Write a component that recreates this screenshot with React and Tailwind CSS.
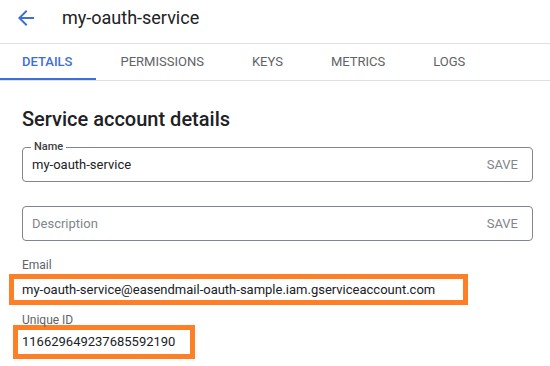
const tabs = ["DETAILS", "PERMISSIONS", "KEYS", "METRICS", "LOGS"];

function ArrowBack() {
  return (
    <svg width="24" height="24" viewBox="0 0 24 24" className="fill-[#3f6fd6]">
      <path d="M20 11H7.83l5.59-5.59L12 4l-8 8 8 8 1.41-1.41L7.83 13H20v-2z" />
    </svg>
  );
}

function Field({ label, value, placeholder }) {
  return (
    <div className="relative h-[35px] w-[511px] rounded-[4px] border border-[#80868b] flex items-center justify-between pl-[9px] pr-[14px]">
      {label && (
        <span className="absolute -top-[8px] left-[8px] bg-white px-[3px] text-[11px] leading-[14px] font-medium text-[#3c4043]">
          {label}
        </span>
      )}
      {value ? (
        <span className="text-[13px] text-[#202124]">{value}</span>
      ) : (
        <span className="text-[13px] text-[#80868b]">{placeholder}</span>
      )}
      <span className="text-[13px] text-[#80868b]">SAVE</span>
    </div>
  );
}

export default function App() {
  return (
    <div className="w-[550px] h-[366px] overflow-hidden bg-white font-['Roboto','Liberation_Sans',sans-serif]">
      {/* Title bar */}
      <div className="h-[44px] border-b border-[#e0e0e0] flex items-center pb-[8px] pl-[14px]">
        <ArrowBack />
        <h1 className="ml-[24px] text-[18px] text-[#202124]">my-oauth-service</h1>
      </div>

      {/* Tabs */}
      <div className="h-[37px] border-b border-[#e0e0e0] flex">
        {tabs.map((t, i) => (
          <div
            key={t}
            className={
              i === 0
                ? "h-full pl-[22px] pr-6 flex items-center text-[13px] font-medium text-[#3f6fd6] border-b-2 border-[#3f6fd6] pt-[2px]"
                : "h-full px-6 flex items-center text-[13px] text-[#5f6368] pt-[2px] pb-[2px]"
            }
          >
            {t}
          </div>
        ))}
      </div>

      {/* Content */}
      <div className="px-[22px] pt-[26px]">
        <h2 className="text-[20px] leading-[24px] font-medium text-[#202124]">Service account details</h2>

        <div className="mt-[16px]">
          <Field label="Name" value="my-oauth-service" />
        </div>
        <div className="mt-[24px]">
          <Field placeholder="Description" />
        </div>

        <div className="mt-[16px] text-[12px] leading-[16px] text-[#5f6368]">Email</div>
        <div className="mt-[1px] -ml-[13px] w-[459px] h-[31px] border-[5px] border-[#ff7f27] flex items-center pl-[8px]">
          <span className="text-[13px] text-[#202124]">my-oauth-service@easendmail-oauth-sample.iam.gserviceaccount.com</span>
        </div>

        <div className="mt-[7px] text-[12px] leading-[16px] text-[#5f6368]">Unique ID</div>
        <div className="-mt-[3px] -ml-[9px] w-[182px] h-[34px] border-[5px] border-[#ff7f27] flex items-center pl-[4px]">
          <span className="text-[13px] text-[#202124]">116629649237685592190</span>
        </div>
      </div>
    </div>
  );
}
